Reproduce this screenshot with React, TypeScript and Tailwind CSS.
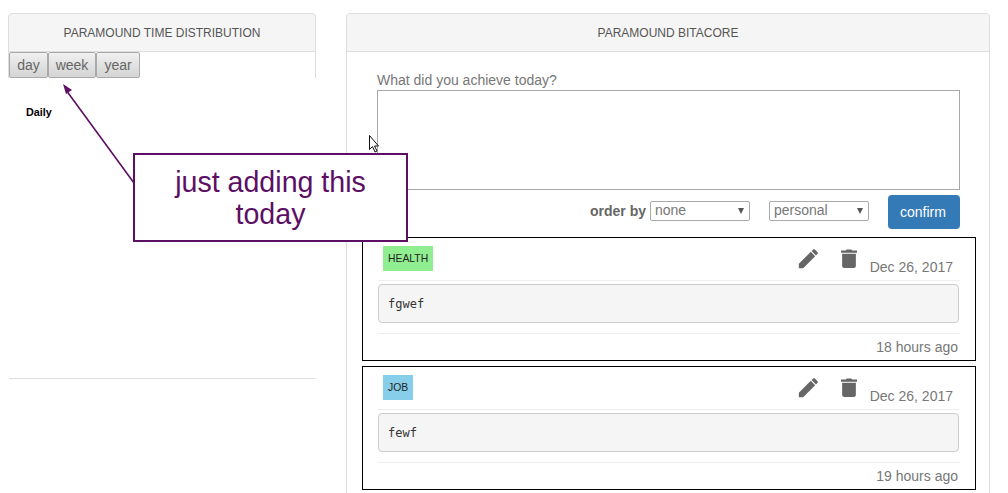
const sans = '"Liberation Sans", Arial, sans-serif';

function PencilIcon() {
  return (
    <svg width="22" height="22" viewBox="0 0 24 24" className="fill-[#666]">
      <path d="M2 17.25V22h4.75L19.81 8.94l-4.75-4.75L2 17.25zM22.43 6.32a1.26 1.26 0 0 0 0-1.78l-2.97-2.97a1.26 1.26 0 0 0-1.78 0l-1.76 1.76 4.75 4.75 1.76-1.76z" />
    </svg>
  );
}

function TrashIcon() {
  return (
    <svg width="16" height="19" viewBox="0 0 14 18" preserveAspectRatio="none" className="fill-[#666]">
      <path d="M1 4.5h12v11.7a1.8 1.8 0 0 1-1.8 1.8H2.8A1.8 1.8 0 0 1 1 16.2V4.5zM0 1.5h4.2L5 .4h4l.8 1.1H14v2H0v-2z" />
    </svg>
  );
}

function Entry({
  tag,
  tagClass,
  text,
  ago,
}: {
  tag: string;
  tagClass: string;
  text: string;
  ago: string;
}) {
  return (
    <div className="h-[124px] w-[614px] border border-black bg-white px-[15px]">
      <div className="relative h-[43px] border-b border-[#eee]">
        <span className={`absolute left-[5px] top-[8px] h-[25px] px-[5px] text-[10.4px] leading-[25px] text-[#222] ${tagClass}`}>
          {tag}
        </span>
        <div className="absolute left-[419px] top-[10px]">
          <PencilIcon />
        </div>
        <div className="absolute left-[463px] top-[11px]">
          <TrashIcon />
        </div>
        <span className="absolute right-[7px] top-[20px] text-[14px] leading-[18px] text-[#777]">Dec 26, 2017</span>
      </div>
      <div className="mr-px mt-[3px] h-[39px] rounded-[4px] border border-[#ccc] bg-[#f5f5f5] px-[9px] pt-[10px] font-['DejaVu_Sans_Mono',monospace] text-[12px] leading-[18px] text-[#333]">
        {text}
      </div>
      <div className="mt-[10px] border-t border-[#eee] pr-[2px] pt-[3px] text-right text-[14px] leading-[20px] text-[#777]">{ago}</div>
    </div>
  );
}

function Picker({ value, className }: { value: string; className: string }) {
  return (
    <div className={`relative mb-[2px] h-[20px] w-[100px] ${className}`}>
      <select className="block h-[20px] w-[100px] appearance-none rounded-[2px] border border-[#a9a9a9] bg-white pb-[2px] pl-[4px] text-[14px] leading-[16px] text-[#777]">
        <option>{value}</option>
      </select>
      <span className="absolute right-[6px] top-[7px] h-0 w-0 border-x-[3px] border-t-[6px] border-x-transparent border-t-[#555]" />
    </div>
  );
}

export default function App() {
  return (
    <div className="relative flex h-[493px] w-[1008px] items-start overflow-hidden bg-white pl-[8px] pt-[13px]" style={{ fontFamily: sans }}>
      <div className="w-[308px]">
        <div className="flex h-[39px] items-center justify-center rounded-t-[4px] border border-[#ddd] bg-[#f5f5f5] text-[12px] text-[#555]">
          PARAMOUND TIME DISTRIBUTION
        </div>
        <div className="flex h-[26px] items-start border-x border-[#ddd]">
          <button className="h-[26px] w-[39px] rounded-[2px] border border-[#aaa] bg-gradient-to-b from-[#f0f0f0] to-[#d4d4d4] text-[14px] text-[#666]">day</button>
          <button className="h-[26px] w-[48px] rounded-[2px] border border-[#aaa] bg-gradient-to-b from-[#f0f0f0] to-[#d4d4d4] text-[14px] text-[#666]">week</button>
          <button className="h-[26px] w-[44px] rounded-[2px] border border-[#aaa] bg-gradient-to-b from-[#f0f0f0] to-[#d4d4d4] text-[14px] text-[#666]">year</button>
        </div>
        <div className="mx-px h-[301px] border-b border-[#ddd] pl-[17px] pt-[27px] text-[10.8px] font-bold leading-[14px] text-black">Daily</div>
      </div>

      <div className="ml-[30px] h-[500px] w-[644px] rounded-t-[4px] border border-[#ddd]">
        <div className="flex h-[38px] items-center justify-center rounded-t-[4px] border-b border-[#ddd] bg-[#f5f5f5] text-[12px] text-[#555]">
          PARAMOUND BITACORE
        </div>
        <div className="pl-[15px]">
          <div className="pl-[15px] pt-[19px]">
            <div className="h-[19px] text-[14px] leading-[19px] text-[#777]">What did you achieve today?</div>
            <textarea className="block h-[100px] w-[583px] resize-none border border-[#a9a9a9]" />
            <div className="mt-[5px] flex h-[34px] w-[583px] items-center justify-end">
              <span className="mb-[2px] mr-[4px] text-[14px] font-bold text-[#666]">order by</span>
              <Picker value="none" className="" />
              <Picker value="personal" className="ml-[19px]" />
              <button className="ml-[19px] h-[34px] w-[72px] rounded-[4px] bg-[#337ab7] pr-[2px] text-[14px] text-white">confirm</button>
            </div>
          </div>
          <div className="mt-[8px] flex flex-col gap-[5px]">
            <Entry tag="HEALTH" tagClass="bg-[#90ee90]" text="fgwef" ago="18 hours ago" />
            <Entry tag="JOB" tagClass="bg-[#87ceeb]" text="fewf" ago="19 hours ago" />
          </div>
        </div>
      </div>

      {/* annotation layer */}
      <svg className="pointer-events-none absolute left-0 top-0" width="1008" height="493">
        <line x1="134" y1="183" x2="66" y2="90" stroke="#5c0f63" strokeWidth="1.6" />
        <path d="M63 84l9 6-6 4z" fill="#5c0f63" />
        <path d="M369.5 135.5v14l3-3 2.5 5.5 2-1-2.5-5h4z" fill="#fff" stroke="#111" strokeWidth="1" />
      </svg>
      <div className="absolute left-[133px] top-[153px] flex h-[89px] w-[275px] items-center justify-center border-2 border-[#5c0f63] bg-white text-center text-[28.6px] leading-[32px] text-[#5c0f63]">
        just adding this
        <br />
        today
      </div>
    </div>
  );
}
